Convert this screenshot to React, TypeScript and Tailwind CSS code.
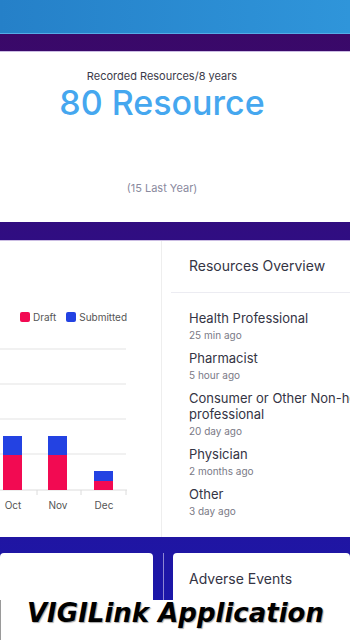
type OverviewItem = {
  title: string;
  ago: string;
};

const OVERVIEW: OverviewItem[] = [
  { title: 'Health Professional', ago: '25 min ago' },
  { title: 'Pharmacist', ago: '5 hour ago' },
  { title: 'Consumer or Other Non-health professional', ago: '20 day ago' },
  { title: 'Physician', ago: '2 months ago' },
  { title: 'Other', ago: '3 day ago' },
];

type Bar = { label: string; x: number; top: number; split: number };

const BARS: Bar[] = [
  { label: 'Oct', x: 3, top: 96, split: 115 },
  { label: 'Nov', x: 48, top: 96, split: 115 },
  { label: 'Dec', x: 94, top: 131, split: 141 },
];

function MonthlyChart() {
  return (
    <svg width="162" height="180" viewBox="0 0 162 180" className="block">
      {[9, 44, 79, 114].map((y) => (
        <line key={y} x1="0" x2="126" y1={y} y2={y} stroke="#ececec" strokeWidth="1.5" />
      ))}
      <line x1="0" x2="127" y1="150" y2="150" stroke="#dcdcdc" strokeWidth="1" />
      {[37, 81, 126].map((x) => (
        <line key={x} x1={x} x2={x} y1="150" y2="155" stroke="#dcdcdc" strokeWidth="1" />
      ))}
      {BARS.map((bar) => (
        <g key={bar.label}>
          <rect x={bar.x} y={bar.top} width="19" height={bar.split - bar.top} fill="#2342e2" />
          <rect x={bar.x} y={bar.split} width="19" height={150 - bar.split} fill="#f20a52" />
          <text
            x={bar.x + 10}
            y="169"
            textAnchor="middle"
            fontSize="10"
            fill="#555"
            fontFamily="Inter, sans-serif"
          >
            {bar.label}
          </text>
        </g>
      ))}
    </svg>
  );
}

export default function App() {
  return (
    <div className="h-[640px] w-[350px] overflow-hidden bg-white font-['Inter',sans-serif]">
      <div className="h-[34px] border-b border-[#55ace7] bg-gradient-to-r from-[#2580c8] to-[#2f95da]" />

      <div className="h-[566px] overflow-hidden bg-gradient-to-b from-[#3a0868] via-[#2b0d8c] to-[#1b17a9] pt-[17px]">
        {/* totals */}
        <div className="flex h-[171px] flex-col items-center border-t border-[#cbbde3] bg-white pr-[26px] pt-[17px]">
          <p className="text-[11px] leading-[14px] text-[#3b3b4a]">Recorded Resources/8 years</p>
          <p className="mt-px text-[34px] font-medium leading-[38px] text-[#45a7ef]">80 Resource</p>
          <p className="mt-[59px] text-[11px] leading-[14px] text-[#8a8a9e]">(15 Last Year)</p>
        </div>

        {/* chart + overview */}
        <div className="mt-[18px] flex h-[297px] w-[420px] border-t border-[#cbbde3] bg-white">
          <div className="w-[162px] shrink-0 border-r border-[#eeeeee]">
            <div className="mt-[71px] flex h-[10px] items-center gap-[3px] pl-[20px] text-[10px] text-[#555]">
              <span className="h-[10px] w-[10px] rounded-[2px] bg-[#f20a52]" />
              <span className="mr-[7px]">Draft</span>
              <span className="h-[10px] w-[10px] rounded-[2px] bg-[#2342e2]" />
              <span>Submitted</span>
            </div>
            <div className="mt-[18px]">
              <MonthlyChart />
            </div>
          </div>

          <div className="flex-1">
            <div className="ml-[9px] border-b border-[#ececf2] pb-[16px] pl-[18px] pt-[15px]">
              <h3 className="text-[14px] leading-[20px] text-[#343444]">Resources Overview</h3>
            </div>
            <ul className="flex flex-col gap-[8px] pl-[27px] pt-[17px]">
              {OVERVIEW.map((item) => (
                <li key={item.title} className="w-[215px]">
                  <p className="text-[13px] leading-[16px] text-[#343444]">{item.title}</p>
                  <p className="mt-[2px] text-[10px] leading-[14px] text-[#7a7a86]">{item.ago}</p>
                </li>
              ))}
            </ul>
          </div>
        </div>

        {/* next row */}
        <div className="mt-[16px] flex h-[80px]">
          <div className="w-[153px] shrink-0 rounded-t-[4px] bg-white" />
          <div className="flex w-[20px] shrink-0 justify-center">
            <div className="w-px bg-[#8d86d2]" />
          </div>
          <div className="flex-1 rounded-t-[4px] bg-white pl-[16px] pt-[16px]">
            <h3 className="text-[14px] leading-[20px] text-[#343444]">Adverse Events</h3>
          </div>
        </div>
      </div>

      <div className="h-[40px] border-l border-[#9a9a9a] bg-white text-center">
        <p className="font-['DejaVu_Sans',sans-serif] text-[26px] font-bold italic leading-[26px] text-black [text-shadow:1px_1px_1px_rgba(0,0,0,0.35)]">
          VIGILink Application
        </p>
      </div>
    </div>
  );
}
